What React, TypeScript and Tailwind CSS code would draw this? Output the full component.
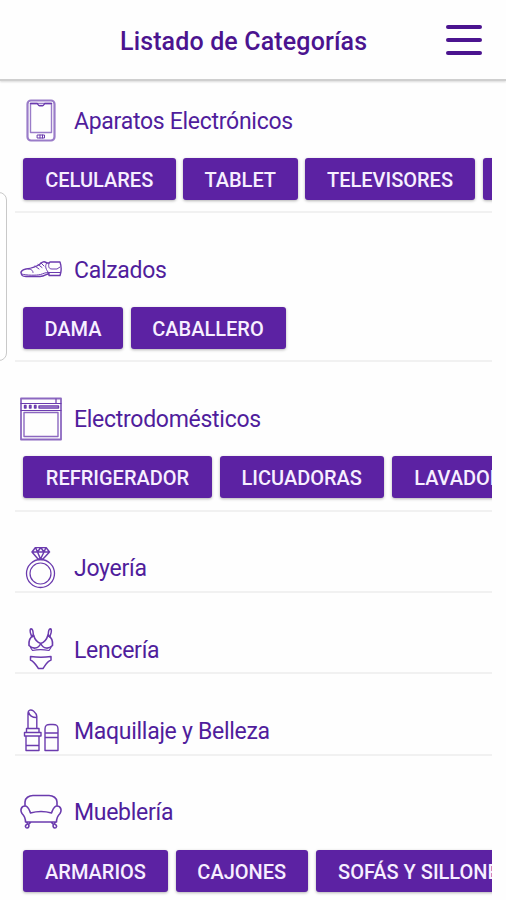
import type { ReactNode } from "react";

type Item = {
  label: string;
  width: string;
};

type Category = {
  name: string;
  icon: ReactNode;
  items?: Item[];
};

const categories: Category[] = [
  {
    name: "Aparatos Electrónicos",
    icon: (
      <>
        <rect x="7.5" y="1.5" width="27" height="40" rx="3.5" strokeWidth="2.2" stroke="#9a7cc8" />
        <path d="M10.500 4.500h21v29h-21z" stroke="#9a7cc8" strokeWidth="1.4" />
        <path d="M10.500 4.500H17c1 0 1 2.300 2.500 2.300h3C24 6.800 24 4.500 25 4.500h6.500" strokeWidth="1.4" />
        <path d="M17.500 36h7v3h-7zM20 36v3M22.500 36v3" />
      </>
    ),
    items: [
      { label: "CELULARES", width: "w-[152.5px]" },
      { label: "TABLET", width: "w-[114.5px]" },
      { label: "TELEVISORES", width: "w-[170px]" },
      { label: "CONSOLAS", width: "w-[150px]" },
    ],
  },
  {
    name: "Calzados",
    icon: (
      <>
        <path d="M1 25c0-2 2-3.500 5-4 6-.8 10-2 14-5 2-1.500 3-3 5-2l2 1h2l1-1h10c1 3 1.500 7 .8 10.500l-.8 3h-11v-2c-3 1-5 3-9 3H6c-4 0-5-1.500-5-4.500z" strokeWidth="1.4" />
        <path d="M1.500 26c5 1.500 15 1.500 19 .5 3-.8 4-2 8.500-2h11.500M8 21c4 0 5 2 5 3.500M15 18l4 3M18 16.500l4 3M21 15l3 3M27 15c-2 2-2 5 1 9M29 15c-1 4 0 6 3 6h5l3-2" />
      </>
    ),
    items: [
      { label: "DAMA", width: "w-[100px]" },
      { label: "CABALLERO", width: "w-[155px]" },
    ],
  },
  {
    name: "Electrodomésticos",
    icon: (
      <>
        <path d="M1 1.500h40v41H1z" strokeWidth="1.8" stroke="#8c68c0" />
        <path d="M1 6.500h40M1 13.500h40M36 2v4.500" strokeWidth="1.2" />
        <path d="M4 15.500h34v24H4z" strokeWidth="1.4" stroke="#8c68c0" />
        <path d="M4.500 8.500H6V11H4.500zM9.500 8.500H11V11H9.500zM14.500 8.500H16V11h-1.500zM19 9h19.500v2H19z" strokeWidth="1.4" />
      </>
    ),
    items: [
      { label: "REFRIGERADOR", width: "w-[189px]" },
      { label: "LICUADORAS", width: "w-[164.5px]" },
      { label: "LAVADORAS", width: "w-[159px]" },
    ],
  },
  {
    name: "Joyería",
    icon: (
      <>
        <circle cx="20.5" cy="26.5" r="14" strokeWidth="1.3" />
        <circle cx="20.5" cy="26.5" r="10.5" strokeWidth="1.2" />
        <path d="M15.500 0.500h10.500l3.500 4.500-6.500 7h-5l-6-7zM12 5h17.500M15.500 0.500l2 4.500 3 7L24 5l2-4.500M17.500 5l3.300-4.500L24 5M18 12.500h5" strokeWidth="1.5" />
      </>
    ),
  },
  {
    name: "Lencería",
    icon: (
      <>
        <path d="M12 9c-1-3-2.800-5-1.500-8 3-1 2.500 5 3 7M29.500 9c1-3 2.800-5 1.500-8-3-1-2.500 5-3 7" strokeWidth="1.5" />
        <path d="M13.500 7c-3 2-5 6-4.500 10.500 4 4 9 3.500 11.800-2-3.300-1-6-4-7.300-8.500zM28 7c3 2 5 6 4.500 10.500-4 4-9 3.500-11.800-2 3.300-1 6-4 7.300-8.500z" strokeWidth="1.6" />
        <path d="M10.500 19.500l2 3c5-1 11-1 16.500 0l2-3" strokeWidth="1.2" />
        <path d="M10.500 28.500c7 1 14 1 20.500 0v3.500c-4 1.500-5.500 5-8 8.500h-4.500c-2.500-3.500-4.500-7-8-8.500z" strokeWidth="1.5" />
      </>
    ),
  },
  {
    name: "Maquillaje y Belleza",
    icon: (
      <>
        <path d="M8 19.500V4C8 .8 11 .3 13.500 2c2.300 2 3.300 3 3.300 5.500v12M8.500 3c1 4 3.500 5.500 8 5.500M6.500 19.500H19v4H6.500zM4.500 23.500H21V27H4.500zM6 27h13v14.500H6zM6 36.500h13" strokeWidth="1.4" />
        <path d="M25 41.500V20c0-4 2-4.500 5-4.500h3c3 0 5 .5 5 4.500v21.500zM25 24h13M25 28.500h13" strokeWidth="1.4" />
      </>
    ),
  },
  {
    name: "Mueblería",
    icon: (
      <path
        d="M5 15v-4c0-4 4-6.500 8-6.500h16c4 0 8 2.500 8 6.500v4M5 15c-4 0-5 4.500-3 7.500 2 2 3.500 4 3.500 8.500h31c0-4.500 1.500-6.500 3.500-8.500 2-3 1-7.500-3-7.500-3.500 0-4 3.500-5.500 7-7-2-14-2-21 0C9 18.500 8.500 15 5 15zM6 31c2.500 1 1.500 2 0 3-1 1-.5 3 1 3s2.500-2 1.500-3.500L11 31M36 31c-2.500 1-1.500 2 0 3 1 1 .5 3-1 3s-2.500-2-1.500-3.500L31 31"
        strokeWidth="1.6"
      />
    ),
    items: [
      { label: "ARMARIOS", width: "w-[145px]" },
      { label: "CAJONES", width: "w-[132.5px]" },
      { label: "SOFÁS Y SILLONES", width: "w-[218px]" },
    ],
  },
];

function CategoryRow({ name, icon, items }: Category) {
  return (
    <section className="border-b-2 border-[#f1f1f1] pt-[34.5px] first:pt-[17.5px]">
      <div className="flex h-[44.9px] items-center pl-[5px]">
        <svg
          viewBox="0 0 42 44"
          className="h-11 w-[42px] shrink-0"
          fill="none"
          stroke="#6b3bae"
          strokeWidth="1"
          strokeLinecap="round"
          strokeLinejoin="round"
        >
          {icon}
        </svg>
        <h2 className="ml-3 pt-[1.6px] text-[23px] leading-7 tracking-[-0.28px] text-[#501d9c]">{name}</h2>
      </div>
      {items && (
        <div className="flex h-[67.8px] gap-[7.5px] overflow-hidden pt-[14.5px] pl-2">
          {items.map(({ label, width }) => (
            <button
              key={label}
              className={`${width} h-[42px] shrink-0 rounded-[3px] bg-[#5c22a3] pt-0.5 text-[20px] font-medium whitespace-nowrap text-[#f7efff] shadow-[0_1px_3px_rgba(0,0,0,0.3)]`}
            >
              {label}
            </button>
          ))}
        </div>
      )}
    </section>
  );
}

export default function App() {
  return (
    <div className="relative h-[900px] overflow-hidden bg-[#fefefe] font-['Roboto',sans-serif]">
      <header className="flex h-[81px] items-center border-b-2 border-[#cfcfcf] pr-6 pl-[120px] shadow-[0_1px_2px_rgba(0,0,0,0.15)]">
        <h1 className="pt-1 text-[25px] font-medium tracking-[0.14px] text-[#4b148f]">Listado de Categorías</h1>
        <button className="ml-auto flex w-9 flex-col gap-[9px]" aria-label="Menú">
          <span className="h-1 rounded-full bg-[#4b148f]" />
          <span className="h-1 rounded-full bg-[#4b148f]" />
          <span className="h-1 rounded-full bg-[#4b148f]" />
        </button>
      </header>
      <main className="ml-[15px] w-[477px]">
        {categories.map((category) => (
          <CategoryRow key={category.name} {...category} />
        ))}
      </main>
      {/* edge panel handle */}
      <div className="absolute top-[192px] -left-3 h-[169px] w-[19px] rounded-lg border border-[#c9c9c9] bg-white" />
    </div>
  );
}
